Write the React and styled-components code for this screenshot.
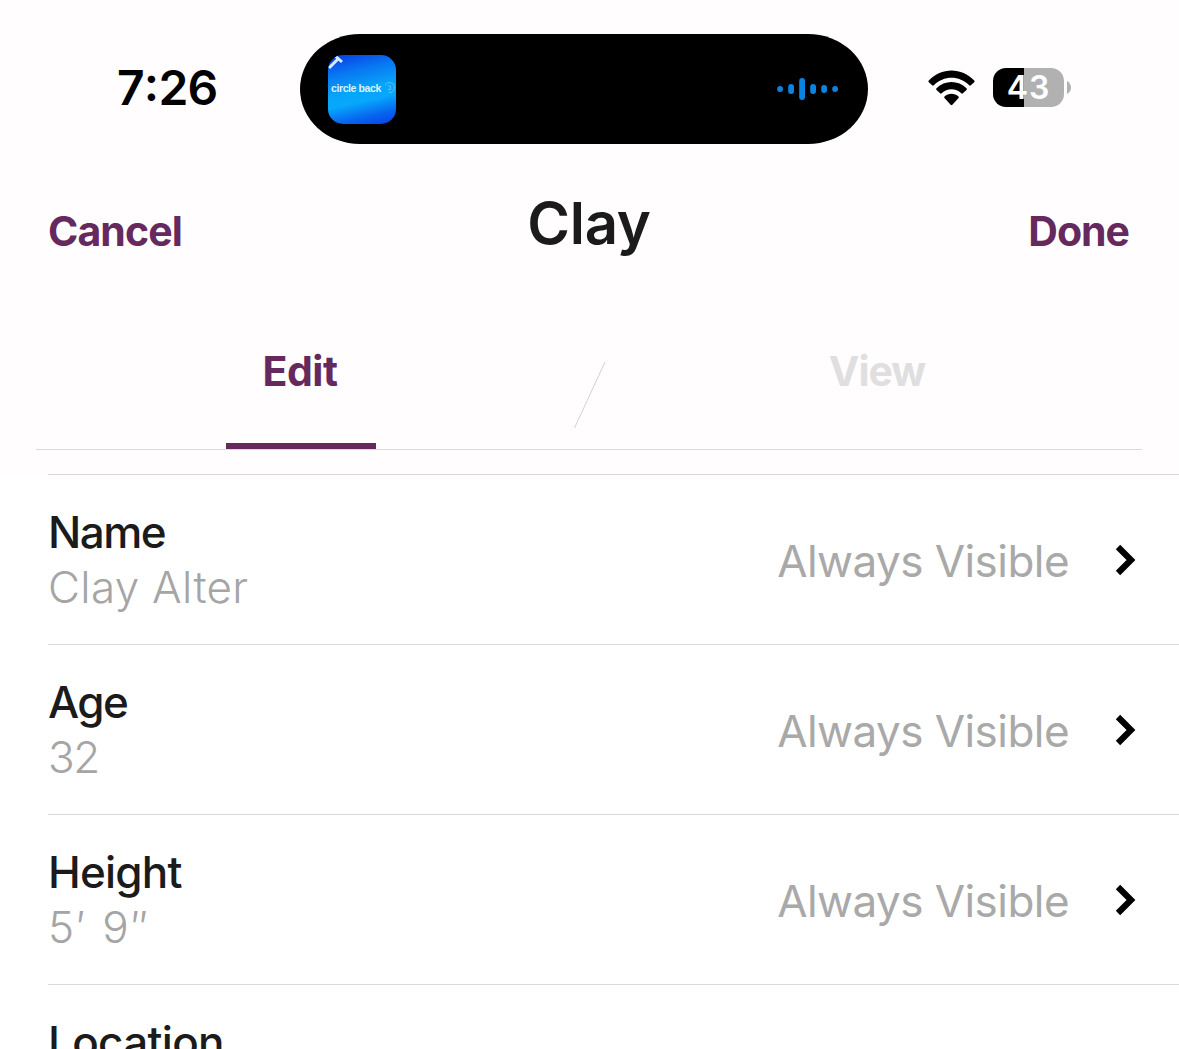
import React from "react";
import styled, { createGlobalStyle } from "styled-components";

const GlobalStyle = createGlobalStyle`
  *, *::before, *::after { box-sizing: border-box; }
  html, body { margin: 0; background: #ffffff; }
  body { font-family: Inter, "Liberation Sans", sans-serif; overflow: hidden; }
`;

const Screen = styled.main`
  width: 1179px;
  height: 1049px;
  overflow: hidden;
  display: flex;
  flex-direction: column;
  background: #ffffff;
`;

const Top = styled.header`
  height: 474px;
  flex: none;
  background: #fffdfe;
`;

const StatusBar = styled.div`
  display: grid;
  grid-template-columns: 300px 568px 1fr;
  align-items: center;
  height: 178px;
`;

const Time = styled.time`
  display: flex;
  margin-top: -2px;
  padding-left: 117px;
  font-size: 48px;
  line-height: 56px;
  font-weight: 600;
  letter-spacing: -0.8px;
  color: #000000;
`;

const Colon = styled.span`
  margin-top: -4px;
`;

const Island = styled.div`
  display: flex;
  align-items: center;
  justify-content: space-between;
  height: 110px;
  padding: 0 29px 0 28px;
  border-radius: 60px / 55px;
  background: #000000;
`;

const Artwork = styled.div`
  display: flex;
  align-items: center;
  position: relative;
  width: 68px;
  height: 69px;
  padding: 0 0 2px 3px;
  border-radius: 15px;
  overflow: hidden;
  background: linear-gradient(167deg, #0844e6 4%, #0878f2 26%, #08a4fa 50%, #07a8fc 64%, #0764ee 84%, #0840e2 100%);
  color: #d8f3ff;
  font: 700 10.5px/14px "Liberation Sans", sans-serif;
  letter-spacing: -0.4px;
  white-space: nowrap;
`;

const ArtworkMarks = styled.svg`
  position: absolute;
  inset: 0;
`;

const Indicators = styled.div`
  display: flex;
  align-items: center;
  margin-top: -3px;
  padding-left: 60px;
`;

const Battery = styled.div`
  display: flex;
  align-items: center;
  justify-content: center;
  width: 71px;
  height: 39px;
  margin: 0 3px 0 18px;
  border-radius: 13px;
  background: linear-gradient(90deg, #000000 31px, #b1b1b1 31px);
  color: #ffffff;
  font-size: 32px;
  line-height: 39px;
  font-weight: 600;
  letter-spacing: 0.8px;
`;

const NavBar = styled.nav`
  display: grid;
  grid-template-columns: 1fr auto 1fr;
  align-items: center;
  height: 104px;
  padding: 2px 50px 0 48px;
`;

const TextButton = styled.button`
  justify-self: ${(p) => p.$side};
  padding: 0;
  border: 0;
  background: none;
  font: inherit;
  font-size: 41px;
  line-height: 50px;
  font-weight: 700;
  letter-spacing: ${(p) => p.$track};
  color: #65295d;
`;

const Title = styled.h1`
  margin: -16px 0 0 1px;
  font-size: 58px;
  line-height: 70px;
  font-weight: 600;
  letter-spacing: -0.2px;
  color: #1c1b1c;
`;

const Tabs = styled.div`
  display: grid;
  grid-template-columns: 150px 1fr 150px;
  height: 168px;
  margin: 0 37px 0 36px;
  padding: 0 190px;
  border-bottom: 1px solid #dbdadb;
`;

const Tab = styled.button`
  padding: 62px 0 45px;
  border: 0;
  border-bottom: 6px solid ${(p) => (p.$active ? "#65295d" : "transparent")};
  background: none;
  font: inherit;
  font-size: 41px;
  line-height: 50px;
  font-weight: 700;
  letter-spacing: ${(p) => p.$track};
  text-indent: ${(p) => (p.$active ? "-2px" : "0")};
  color: ${(p) => (p.$active ? "#65295d" : "#e0dfe0")};
`;

const Slash = styled.svg`
  justify-self: center;
  margin: 80px 0 0 1px;
`;

const List = styled.ul`
  margin: 0 0 0 48px;
  padding: 0;
  list-style: none;
`;

const Row = styled.li`
  display: flex;
  align-items: center;
  justify-content: space-between;
  height: 170px;
  padding: 1px 42px 0 0;
  border-top: 1px solid #d9d9d9;
`;

const Label = styled.div`
  font-size: 44px;
  line-height: 55px;
  font-weight: 500;
  letter-spacing: ${(p) => p.$track};
  color: #1b1b1b;
`;

const Value = styled(Label)`
  font-weight: 300;
  color: #a5a5a5;
`;

const Visibility = styled.div`
  display: flex;
  align-items: center;
  gap: 46px;
  font-size: 44px;
  line-height: 55px;
  font-weight: 400;
  letter-spacing: -0.55px;
  color: #a9a9a9;
`;

const VisibilityText = styled.span`
  padding-top: 2px;
`;

const Chevron = styled.svg`
  margin-top: -1px;
`;

const bars = [
  [0, 6], [11, 10], [22, 22], [33, 10], [44, 8], [55, 6],
];

const fields = [
  { label: "Name", labelTrack: "-1.5px", value: "Clay Alter", valueTrack: "0.3px" },
  { label: "Age", labelTrack: "-1.5px", value: "32", valueTrack: "-1.5px" },
  { label: "Height", labelTrack: "-0.8px", value: "5′ 9″", valueTrack: "2.3px" },
  { label: "Location", labelTrack: "-0.7px" },
];

export default function App() {
  return (
    <Screen>
      <GlobalStyle />
      <Top>
        <StatusBar>
          <Time>7<Colon>:</Colon>26</Time>
          <Island>
            <Artwork>
              circle back
              <ArtworkMarks width="68" height="69" viewBox="0 0 68 69" fill="none">
                <path d="M1 13 11 3M5 -1l9 8" stroke="#d9edff" strokeWidth="3" />
                <path d="M57 30a5 5 0 1 1 4 7.500M60 31h2.500v3.500h-2.500" stroke="#58c3ff" strokeWidth="1" />
              </ArtworkMarks>
            </Artwork>
            <svg width="62" height="24" viewBox="0 0 62 24" fill="#0b84e0">
              {bars.map(([x, h]) => (
                <rect key={x} x={x + 0.2} y={12 - h / 2} width="5.8" height={h} rx="2.9" />
              ))}
            </svg>
          </Island>
          <Indicators>
            <svg width="47" height="36" viewBox="0 0 47 36" fill="#000">
              <path d="M.8 10.500C13-3 34-3 46.200 10.500Q47 11.300 46.200 12.200L42.800 15.300Q42 16 41.200 15.200C31.500 5.200 15.500 5.200 5.800 15.200Q5 16 4.200 15.300L.8 12.200Q0 11.300.8 10.500Z" />
              <path d="M8.500 18.200C16.600 9.900 30.400 9.900 38.500 18.200Q39.300 19 38.500 19.900L34.900 23.300Q34.100 24 33.300 23.300C28 17.800 19 17.800 13.700 23.300Q12.900 24 12.100 23.300L8.500 19.900Q7.700 19 8.500 18.200Z" />
              <path d="M16.500 26.400C20.500 22.800 26.500 22.800 30.500 26.400Q31.300 27.200 30.500 28L24.400 34.800Q23.500 35.700 22.600 34.800L16.500 28Q15.700 27.200 16.500 26.400Z" />
            </svg>
            <Battery>43</Battery>
            <svg width="4" height="13" viewBox="0 0 4 13" fill="#b1b1b1">
              <path d="M0 0Q4 2.5 4 6.5T0 13Z" />
            </svg>
          </Indicators>
        </StatusBar>
        <NavBar>
          <TextButton $side="start" $track="-0.9px">Cancel</TextButton>
          <Title>Clay</Title>
          <TextButton $side="end" $track="-1px">Done</TextButton>
        </NavBar>
        <Tabs>
          <Tab $active $track="-0.5px">Edit</Tab>
          <Slash width="32" height="68" viewBox="0 0 32 68">
            <path d="M31 0 .5 66" stroke="#d2d1d2" strokeWidth="1" />
          </Slash>
          <Tab $track="-1px">View</Tab>
        </Tabs>
      </Top>
      <List>
        {fields.map((field) => (
          <Row key={field.label}>
            <div>
              <Label $track={field.labelTrack}>{field.label}</Label>
              <Value $track={field.valueTrack}>{field.value || "\u00a0"}</Value>
            </div>
            {field.value && (
              <Visibility>
                <VisibilityText>Always Visible</VisibilityText>
                <Chevron width="22" height="32" viewBox="0 0 22 32" fill="none">
                  <path d="M3 3 16 16 3 29" stroke="#000" strokeWidth="6.2" />
                </Chevron>
              </Visibility>
            )}
          </Row>
        ))}
      </List>
    </Screen>
  );
}
